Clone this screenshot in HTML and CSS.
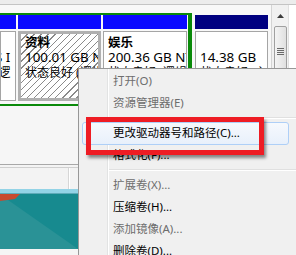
FILE: index.html
```html
<!DOCTYPE html>
<html>
<head>
<meta charset="utf-8">
<link rel="stylesheet" href="styles.css">
</head>
<body>
<div class="screen">
  <div class="topstrip"></div>
  <div class="diskrow">
    <div class="ext">
      <div class="part p0">
        <div class="bar blue"></div>
        <div class="box"><div class="txt right"><div>&nbsp;</div><div class="num">S I</div><div>(逻</div></div></div>
      </div>
      <div class="part p1">
        <div class="bar blue"></div>
        <div class="box sel"><div class="txt"><div class="name">资料</div><div class="num">100.01 GB NTFS</div><div>状态良好 (逻辑驱动器)</div></div></div>
      </div>
      <div class="part p2">
        <div class="bar blue"></div>
        <div class="box"><div class="txt"><div class="name">娱乐</div><div class="num">200.36 GB NTFS</div><div>状态良好 (逻辑驱动器)</div></div></div>
      </div>
    </div>
    <div class="part p3">
      <div class="bar navy"></div>
      <div class="box"><div class="txt"><div class="name">&nbsp;</div><div class="num">14.38 GB</div><div>状态良好 (主分区)</div></div></div>
    </div>
    <div class="scroll">
      <div class="arrow"><svg width="7" height="4" viewBox="0 0 7 4"><path d="M0 4 L3.5 0 L7 4 Z" fill="#3c3c3c"/></svg></div>
      <div class="thumb"><div class="grip"><i></i><i></i><i></i><i></i></div></div>
    </div>
    <div class="winedge"></div>
  </div>
  <div class="lower">
    <div class="pane1"></div>
    <div class="dbl"></div>
    <div class="pane2"><div class="vl"></div></div>
    <div class="sky"></div>
    <svg class="wall" width="78" height="55" viewBox="0 0 78 55" preserveAspectRatio="none">
      <rect width="78" height="55" fill="#178a8f"/>
      <polygon points="0,2 8,6 78,55 0,55" fill="#2a9296"/>
      <polygon points="0,0 20,0 15,5 0,7" fill="#c8492e"/>
    </svg>
  </div>
  <div class="menu">
    <div class="gutter"></div>
    <div class="item dis">打开(O)</div>
    <div class="item dis">资源管理器(E)</div>
    <div class="sep"></div>
    <div class="item hot">更改驱动器号和路径(C)...</div>
    <div class="item">格式化(F)...</div>
    <div class="sep"></div>
    <div class="item dis">扩展卷(X)...</div>
    <div class="item">压缩卷(H)...</div>
    <div class="item dis">添加镜像(A)...</div>
    <div class="item">删除卷(D)...</div>
  </div>
  <div class="mark"></div>
</div>
</body>
</html>
```

FILE: styles.css
```css
html, body { margin: 0; padding: 0; }
.screen {
  width: 296px; height: 255px; position: relative; overflow: hidden;
  background: #f5f5f5;
  font-family: "Noto Sans", "Noto Sans CJK SC", sans-serif;
  font-size: 12px; color: #000;
}
.topstrip { height: 4px; background: #ececec; border-bottom: 1px solid #c4c4c4; }
.diskrow {
  display: flex; height: 93px; padding-top: 8px; box-sizing: content-box;
  background: #f8f8f8; position: relative;
}
.ext {
  display: flex; gap: 2px;
  border-top: 2px solid #0a8a0a; border-bottom: 2px solid #0a8a0a; border-right: 4px solid #0a8a0a;
  height: 89px; padding-right: 1px;
}
.part { display: flex; flex-direction: column; }
.p0 { width: 16px; }
.p1 { width: 83px; }
.p2 { width: 84px; }
.p3 { width: 73px; margin-left: 3px; border-top: 2px solid transparent; }
.bar { height: 14px; flex: none; }
.blue { background: #0a0aff; }
.navy { background: #000080; }
.box {
  margin-top: 2px; height: 68px; background: #fff; border: 1px solid #a5a5a5;
  overflow: hidden; position: relative;
}
.box.sel {
  border: 3px solid #b0b0b0;
  background: repeating-linear-gradient(135deg, #fff 0 4px, #8a8a8a 4px 5px);
  height: 64px;
}
.txt { padding: 3px 0 0 4px; line-height: 15px; white-space: nowrap; font-size: 12px; }
.num { font-size: 13.4px; }
.sel .txt { padding: 1px 0 0 4px; }
.txt.right { padding: 3px 0 0 0; margin-left: -6px; }
.name { font-weight: bold; font-size: 12.5px; }
.scroll {
  width: 16px; margin-left: 3px; margin-top: -8px; border-left: 1px solid #d4d4d4;
  background: #f1f1f1; display: flex; flex-direction: column; align-items: center;
}
.arrow { height: 18px; display: flex; align-items: center; justify-content: center; padding-top: 2px; }
.thumb {
  width: 13px; height: 80px; margin-top: 1px; border: 1px solid #a0a0a0; border-radius: 2px;
  background: linear-gradient(to right, #f4f4f4, #e0e0e0);
  display: flex; justify-content: center; padding-top: 21px; box-sizing: border-box;
}
.grip { display: flex; flex-direction: column; gap: 1px; }
.grip i { display: block; width: 7px; height: 1px; background: #6a6a6a; }
.winedge { flex: 1; margin-top: -8px; background: #fff; border-left: 1px solid #e0e0e0; }
.lower { display: flex; flex-direction: column; }
.pane1 { height: 58px; background: #f6f6f6; }
.dbl { height: 2px; border-top: 1px solid #a8a8a8; border-bottom: 1px solid #cfcfcf; background: #f4f4f4; }
.pane2 { height: 21px; background: #f3f3f3; position: relative; }
.vl { position: absolute; left: 68px; top: 0; bottom: 0; width: 1px; background: #d6d6d6; border-right: 1px solid #fff; }
.sky { height: 4px; background: #93d3e6; border-bottom: 1px solid #5eaab8; }
.wall { display: block; }
.menu {
  position: absolute; left: 78px; top: 68px; width: 240px; height: 200px;
  background: #f0f0f0; border: 1px solid #979797; box-sizing: border-box;
  padding-top: 1px; color: #000; font-size: 11.5px;
}
.gutter { position: absolute; left: 28px; top: 0; bottom: 0; width: 1px; background: #e2e3e3; border-right: 1px solid #fff; }
.item { height: 22px; line-height: 22px; padding-left: 34px; position: relative; white-space: nowrap; }
.item.dis { color: #6d6d6d; }
.item.hot::before {
  content: ""; position: absolute; left: 3px; top: 0; width: 205px; height: 21px;
  border: 1px solid #aecff7; border-radius: 3px;
  background: linear-gradient(#f6f9fd, #e8f0fb);
  z-index: -1;
}
.item.hot { z-index: 0; }
.sep { height: 8px; position: relative; }
.sep::after { content: ""; position: absolute; left: 30px; right: 2px; top: 3px; height: 1px; background: #e0e0e0; border-bottom: 1px solid #fff; }
.mark {
  position: absolute; left: 86px; top: 117px; width: 178px; height: 38px; box-sizing: border-box;
  border: 5px solid #ee1c24;
  box-shadow: 2px 3px 3px rgba(0,0,0,0.45);
}
```
